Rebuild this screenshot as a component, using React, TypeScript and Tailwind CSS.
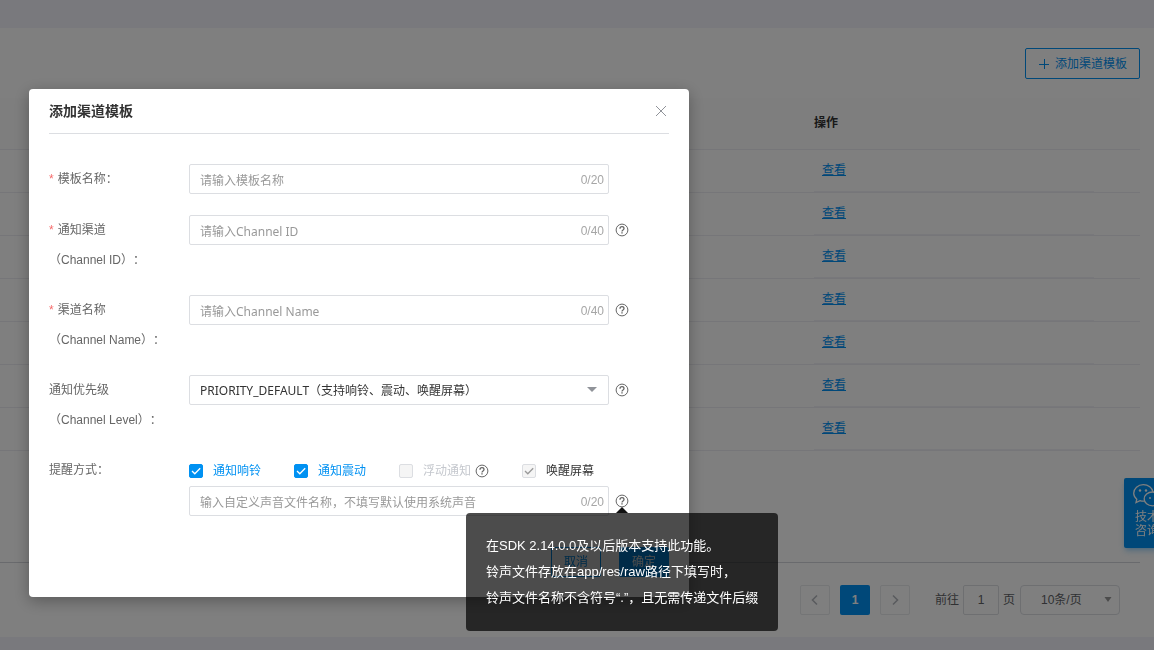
import type { ReactNode } from 'react'

interface CountedInputProps {
  id: string
  placeholder: string
  max: number
  label?: string
}

interface FieldProps {
  id: string
  title: string
  subtitle?: string
  required?: boolean
  help?: boolean
  children: ReactNode
}

interface CheckOptionProps {
  label: string
  checked?: boolean
  disabled?: boolean
  className: string
}

const rows = [1, 2, 3, 4, 5, 6, 7]

const alertOptions = [
  { label: '通知响铃', checked: true, className: 'text-[#0091f2]' },
  { label: '通知震动', checked: true, className: 'text-[#0091f2]' },
  { label: '浮动通知', disabled: true, className: 'text-[#c5c8ce]', help: true },
  { label: '唤醒屏幕', checked: true, disabled: true, className: 'text-[#333333]' },
]

function HelpIcon() {
  return (
    <svg className="size-[14px] shrink-0" viewBox="0 0 14 14" fill="none" stroke="#666666">
      <circle cx="7" cy="7" r="5.9" strokeWidth="1" />
      <path d="M5 5.7C5 4.4 5.9 3.7 7 3.7s2 .7 2 1.8c0 1.3-2 1.5-2 2.9" strokeWidth="1.3" />
      <path d="M7 9.2v1.4" strokeWidth="1.4" />
    </svg>
  )
}

function CountedInput({ id, placeholder, max, label }: CountedInputProps) {
  return (
    <div className="flex h-[30px] w-[420px] items-center rounded-xs border border-[#dcdee2] bg-white pr-1">
      <input
        id={id}
        type="text"
        aria-label={label}
        placeholder={placeholder}
        className="h-full min-w-0 flex-1 px-[10px] pt-[2px] font-['Noto_Sans','Noto_Sans_CJK_SC',sans-serif] text-xs outline-none placeholder:text-[#999999]"
      />
      <span className="pt-[2px] text-xs text-[#a6a6a6]">0/{max}</span>
    </div>
  )
}

function Field({ id, title, subtitle, required, help, children }: FieldProps) {
  return (
    <div className="flex min-h-[31px] items-start">
      <label
        htmlFor={id}
        className="w-[140px] shrink-0 leading-[30px] text-[#666666] [text-spacing-trim:space-all]"
      >
        {required && <span className="mr-1 text-[#f56c6c]">*</span>}
        {title}
        {subtitle && <span className="block">{subtitle}</span>}
      </label>
      {children}
      {help && (
        <button type="button" aria-label="帮助" className="ml-[6px] flex h-[30px] items-center">
          <HelpIcon />
        </button>
      )}
    </div>
  )
}

function CheckOption({ label, checked, disabled, className }: CheckOptionProps) {
  return (
    <label className={`flex items-center gap-[10px] ${className}`}>
      <span className="relative size-[14px]">
        <input
          type="checkbox"
          defaultChecked={checked}
          disabled={disabled}
          className="block size-[14px] appearance-none rounded-xs border border-[#dcdee2] bg-white checked:border-[#0091f2] checked:bg-[#0091f2] disabled:border-[#dcdee2] disabled:bg-[#f5f5f5]"
        />
        {checked && (
          <svg
            className={`pointer-events-none absolute inset-0 ${disabled ? 'text-[#999999]' : 'text-white'}`}
            viewBox="0 0 14 14"
            fill="none"
            stroke="currentColor"
            strokeWidth="1.3"
          >
            <path d="M3 7l2.8 2.8L11.2 4.2" />
          </svg>
        )}
      </span>
      {label}
    </label>
  )
}

function TemplateTable() {
  return (
    <table className="w-full table-fixed border-collapse text-left">
      <thead>
        <tr className="h-[51px] border-b border-[#ededf2] bg-[#fdfdfd]">
          <th />
          <th className="w-[326px] font-bold text-[#333333]">操作</th>
        </tr>
      </thead>
      <tbody>
        {rows.map((row) => (
          <tr key={row} className="h-[43px] border-b border-[#ededf2]">
            <td />
            <td className="p-0 align-top">
              <div className="flex h-[42px] w-[280px] items-center border-b border-[#f0f0f7] pl-2">
                <a href="#view" className="text-[#0091f2] underline">
                  查看
                </a>
              </div>
            </td>
          </tr>
        ))}
      </tbody>
    </table>
  )
}

function Pagination() {
  return (
    <nav className="mt-[111px] flex items-center justify-end border-t border-[#d2d4da] pt-[22px] pr-5 pb-[22px] text-[#606266]">
      <button
        type="button"
        aria-label="上一页"
        className="flex size-[30px] items-center justify-center rounded-xs border border-[#e8eaec]"
      >
        <svg className="size-3" viewBox="0 0 12 12" fill="none" stroke="#b4b7bd" strokeWidth="1.6">
          <path d="M8 1.500L3.500 6 8 10.500" />
        </svg>
      </button>
      <button type="button" className="mx-[10px] size-[30px] rounded-xs bg-[#0091f2] font-bold text-white">
        1
      </button>
      <button
        type="button"
        aria-label="下一页"
        className="flex size-[30px] items-center justify-center rounded-xs border border-[#e8eaec]"
      >
        <svg className="size-3" viewBox="0 0 12 12" fill="none" stroke="#b4b7bd" strokeWidth="1.6">
          <path d="M4 1.500L8.500 6 4 10.500" />
        </svg>
      </button>
      <label htmlFor="page" className="mr-1 ml-[25px]">
        前往
      </label>
      <input
        id="page"
        defaultValue="1"
        className="h-[30px] w-9 rounded-xs border border-[#dcdee2] text-center"
      />
      <span className="mx-1">页</span>
      <div className="relative ml-px">
        <select
          aria-label="每页条数"
          className="block h-[30px] w-[100px] appearance-none rounded-sm border border-[#dcdee2] pl-5"
        >
          <option>10条/页</option>
        </select>
        <svg className="pointer-events-none absolute top-3 right-2 h-[5px] w-2" viewBox="0 0 8 5">
          <path d="M0.500 0h7L4 5z" fill="#999999" />
        </svg>
      </div>
    </nav>
  )
}

function SupportTab() {
  return (
    <a
      href="#support"
      className="fixed top-[478px] -right-3 flex h-[70px] w-[42px] flex-col items-start rounded-xs bg-[#0091f2] pt-[6px] pl-[9px] leading-[14px] text-white shadow-md shadow-[#0091f2]/30"
    >
      <svg className="mb-[3px] h-[23px] w-[28px]" viewBox="0 0 28 23" fill="none" stroke="currentColor" strokeWidth="1.3">
        <path d="M11 17.2c-1.500.1-2.600-.1-4-.6L3 18.500l.8-3.300C1.800 13.600.7 11.600.7 9.300.7 4.500 5 .7 10.300.7c5 0 9 3.100 9.700 7.300" />
        <path d="M19.500 8c-4.700 0-8.300 3-8.300 6.900s3.600 6.900 8.300 6.900c1 0 2-.1 2.900-.4l2.900 1.400-.6-2.600c1.900-1.300 2.700-3.100 2.700-5.300 0-3.900-3.400-6.900-7.900-6.900z" />
        <g fill="currentColor" stroke="none">
          <circle cx="7" cy="6.500" r="1.2" />
          <circle cx="13" cy="6.500" r="1.200" />
          <circle cx="17" cy="14" r="1" />
          <circle cx="22" cy="14" r="1" />
        </g>
      </svg>
      <span className="ml-[2px] whitespace-nowrap">技术</span>
      <span className="ml-[2px] whitespace-nowrap">咨询</span>
    </a>
  )
}

function SoundTooltip() {
  return (
    <div
      role="tooltip"
      className="absolute top-[27px] -left-[149px] z-10 rounded-sm bg-black/70 p-5 text-[13px] leading-[26px] whitespace-nowrap text-white"
    >
      <svg className="absolute -top-[6px] left-[150px] h-[6px] w-3" viewBox="0 0 12 6">
        <path d="M6 0l6 6H0z" fill="#111111" />
      </svg>
      <p>在SDK 2.14.0.0及以后版本支持此功能。</p>
      <p>铃声文件存放在app/res/raw路径下填写时，</p>
      <p>铃声文件名称不含符号“.”，且无需传递文件后缀</p>
    </div>
  )
}

function TemplateDialog() {
  return (
    <section
      role="dialog"
      aria-labelledby="dialog-title"
      className="w-[660px] rounded-sm bg-white px-5 pb-5 shadow-[0_4px_16px_rgba(0,0,0,0.3)]"
    >
      <header className="flex h-[45px] items-center justify-between border-b border-[#dcdee2]">
        <h2 id="dialog-title" className="text-sm font-bold text-[#333333]">
          添加渠道模板
        </h2>
        <button type="button" aria-label="关闭" className="mr-[2px]">
          <svg className="size-3" viewBox="0 0 12 12" stroke="#909399" strokeWidth="1">
            <path d="M1 1l10 10M11 1L1 11" />
          </svg>
        </button>
      </header>

      <form className="mt-[30px]">
        <div className="flex flex-col gap-5">
          <Field id="name" title="模板名称：" required>
            <CountedInput id="name" placeholder="请输入模板名称" max={20} />
          </Field>
          <Field id="channel-id" title="通知渠道" subtitle="（Channel ID）：" required help>
            <CountedInput id="channel-id" placeholder="请输入Channel ID" max={40} />
          </Field>
          <Field id="channel-name" title="渠道名称" subtitle="（Channel Name）：" required help>
            <CountedInput id="channel-name" placeholder="请输入Channel Name" max={40} />
          </Field>
          <Field id="level" title="通知优先级" subtitle="（Channel Level）：" help>
            <div className="relative">
              <select
                id="level"
                className="block h-[30px] w-[420px] appearance-none rounded-xs border border-[#dcdee2] bg-white px-[10px] pt-[2px] font-['Noto_Sans','Noto_Sans_CJK_SC',sans-serif] text-[#333333]"
              >
                <option>PRIORITY_DEFAULT（支持响铃、震动、唤醒屏幕）</option>
              </select>
              <svg className="pointer-events-none absolute top-3 right-3 h-[5px] w-[10px]" viewBox="0 0 10 5">
                <path d="M0 0h10L5 5z" fill="#909399" />
              </svg>
            </div>
          </Field>
          <Field id="sound" title="提醒方式：">
            <div>
              <div className="flex h-[31px] items-center gap-[33px]">
                {alertOptions.map(({ help, ...option }) => (
                  <div key={option.label} className="flex items-center gap-1">
                    <CheckOption {...option} />
                    {help && <HelpIcon />}
                  </div>
                ))}
              </div>
              <div className="flex items-center gap-[6px]">
                <CountedInput
                  id="sound"
                  label="自定义声音文件名称"
                  placeholder="输入自定义声音文件名称，不填写默认使用系统声音"
                  max={20}
                />
                <div className="relative flex h-[30px] items-center">
                  <button type="button" aria-label="声音文件说明">
                    <HelpIcon />
                  </button>
                  <SoundTooltip />
                </div>
              </div>
            </div>
          </Field>
        </div>

        <div className="mt-[31px] flex justify-end gap-[18px]">
          <button type="button" className="h-[30px] w-[50px] rounded-xs border border-[#0091f2] text-[#0091f2]">
            取消
          </button>
          <button type="button" className="h-[30px] w-[50px] rounded-xs bg-[#0091f2] text-white">
            确定
          </button>
        </div>
      </form>
    </section>
  )
}

export default function App() {
  return (
    <div className="min-h-screen bg-[#f2f3fb] pt-7 font-['Liberation_Sans','Noto_Sans_CJK_SC',sans-serif] text-xs">
      <main className="bg-white pt-5 pr-[14px]">
        <div className="mb-[19px] flex justify-end">
          <button
            type="button"
            className="flex h-[31px] items-center gap-[5px] rounded-xs border border-[#0091f2] px-3 text-[#0091f2]"
          >
            <svg className="size-3" viewBox="0 0 12 12" stroke="currentColor" strokeWidth="1">
              <path d="M1 6.500h10M6.500 1v10" />
            </svg>
            添加渠道模板
          </button>
        </div>
        <TemplateTable />
        <Pagination />
      </main>
      <SupportTab />

      <div className="fixed inset-0 flex items-start bg-black/50 pt-[89px] pl-[29px]">
        <TemplateDialog />
      </div>
    </div>
  )
}
